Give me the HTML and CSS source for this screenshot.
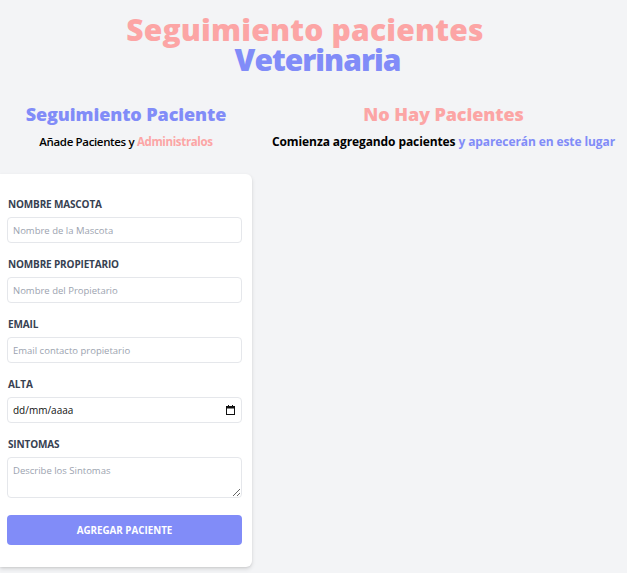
FILE: index.html
```html
<!DOCTYPE html>
<html lang="es">
<head>
<meta charset="utf-8">
<title>Seguimiento pacientes Veterinaria</title>
<link rel="stylesheet" href="styles.css">
</head>
<body>
<header class="header">
  <h1 class="title"><span class="pink line1">Seguimiento pacientes</span><br><span class="indigo line2">Veterinaria</span></h1>
</header>
<main class="main">
  <section class="col-form">
    <h2 class="subtitle indigo">Seguimiento Paciente</h2>
    <p class="lead">Añade Pacientes y <span class="pink strong">Administralos</span></p>
    <form class="card">
      <div class="field">
        <label class="label" for="mascota">Nombre Mascota</label>
        <input class="input" id="mascota" type="text" placeholder="Nombre de la Mascota">
      </div>
      <div class="field">
        <label class="label" for="propietario">Nombre Propietario</label>
        <input class="input" id="propietario" type="text" placeholder="Nombre del Propietario">
      </div>
      <div class="field">
        <label class="label" for="email">Email</label>
        <input class="input" id="email" type="email" placeholder="Email contacto propietario">
      </div>
      <div class="field">
        <label class="label" for="alta">Alta</label>
        <div class="input date">
          <input class="date-text" id="alta" type="text" placeholder="dd/mm/aaaa">
          <svg class="cal" width="9" height="10" viewBox="0 0 9 10" aria-hidden="true">
            <rect x="2" y="0" width="1" height="2" fill="#111"/>
            <rect x="6" y="0" width="1" height="2" fill="#111"/>
            <rect x="0.5" y="1.5" width="8" height="8" fill="none" stroke="#111"/>
            <rect x="0.5" y="1.5" width="8" height="2" fill="#111"/>
          </svg>
        </div>
      </div>
      <div class="field">
        <label class="label" for="sintomas">Sintomas</label>
        <textarea class="input textarea" id="sintomas" placeholder="Describe los Sintomas"></textarea>
      </div>
      <button class="button" type="submit">Agregar Paciente</button>
    </form>
  </section>
  <section class="col-list">
    <h2 class="subtitle pink">No Hay Pacientes</h2>
    <p class="lead-list">Comienza agregando pacientes <span class="indigo">y aparecerán en este lugar</span></p>
  </section>
</main>
</body>
</html>
```

FILE: styles.css
```css
* { box-sizing: border-box; }
html, body { margin: 0; padding: 0; }
body {
  background: #f3f4f6;
  font-family: "Open Sans", "Noto Sans", sans-serif;
  color: #000;
  width: 627px;
  height: 573px;
  overflow: hidden;
}
.pink { color: #fca5a5; }
.indigo { color: #818cf8; }
.strong { font-weight: 700; }

.header {
  width: 610px;
  padding-top: 15px;
}
.title {
  margin: 0;
  text-align: center;
  font-size: 30px;
  line-height: 30px;
  font-weight: 800;
}
.line1 { letter-spacing: 0.2px; }
.line2 {
  display: inline-block;
  margin-left: 25px;
  letter-spacing: -1px;
}

.main {
  display: flex;
  margin-top: 26px;
}
.col-form {
  width: 252px;
  flex: none;
}
.col-list {
  flex: 1;
  padding-left: 8px;
}
.subtitle {
  margin: 0;
  text-align: center;
  font-size: 18px;
  line-height: 26px;
  font-weight: 800;
  letter-spacing: -0.1px;
}
.lead {
  margin: 6px 0 0;
  text-align: center;
  font-size: 11.5px;
  line-height: 18px;
  font-weight: 600;
  letter-spacing: -0.35px;
}
.lead-list {
  margin: 6px 0 0;
  text-align: center;
  font-size: 12px;
  line-height: 18px;
  font-weight: 700;
  letter-spacing: -0.1px;
  white-space: nowrap;
}

.card {
  margin-top: 23px;
  background: #fff;
  border-radius: 0 6px 6px 0;
  box-shadow: 0 2px 4px rgba(0,0,0,0.12), 0 1px 2px rgba(0,0,0,0.06);
  padding: 23px 10px 22px 7px;
}
.field { margin-bottom: 14px; }
.label {
  display: block;
  font-size: 10px;
  line-height: 14px;
  font-weight: 700;
  text-transform: uppercase;
  color: #374151;
  padding-left: 1px;
  letter-spacing: -0.15px;
}
.input {
  display: block;
  width: 100%;
  height: 26px;
  margin-top: 6px;
  border: 1px solid #e5e7eb;
  border-radius: 4px;
  background: #fff;
  padding: 0 5px;
  font-family: inherit;
  font-size: 9.5px;
  color: #111;
  outline: none;
}
.input::placeholder { color: #9ca3af; }
.date {
  display: flex;
  align-items: center;
  justify-content: space-between;
  padding-right: 6px;
}
.date-text {
  border: 0;
  padding: 0;
  margin: 0;
  outline: none;
  font-family: inherit;
  font-size: 10px;
  width: 120px;
  background: transparent;
}
.date-text::placeholder { color: #111; }
.cal { display: block; }
.textarea {
  height: 41px;
  padding-top: 6px;
  resize: vertical;
}
.button {
  display: block;
  width: 100%;
  height: 30px;
  margin-top: 17px;
  border: 0;
  border-radius: 4px;
  background: #818cf8;
  color: #fff;
  font-family: inherit;
  font-size: 9.8px;
  font-weight: 700;
  text-transform: uppercase;
}
```
